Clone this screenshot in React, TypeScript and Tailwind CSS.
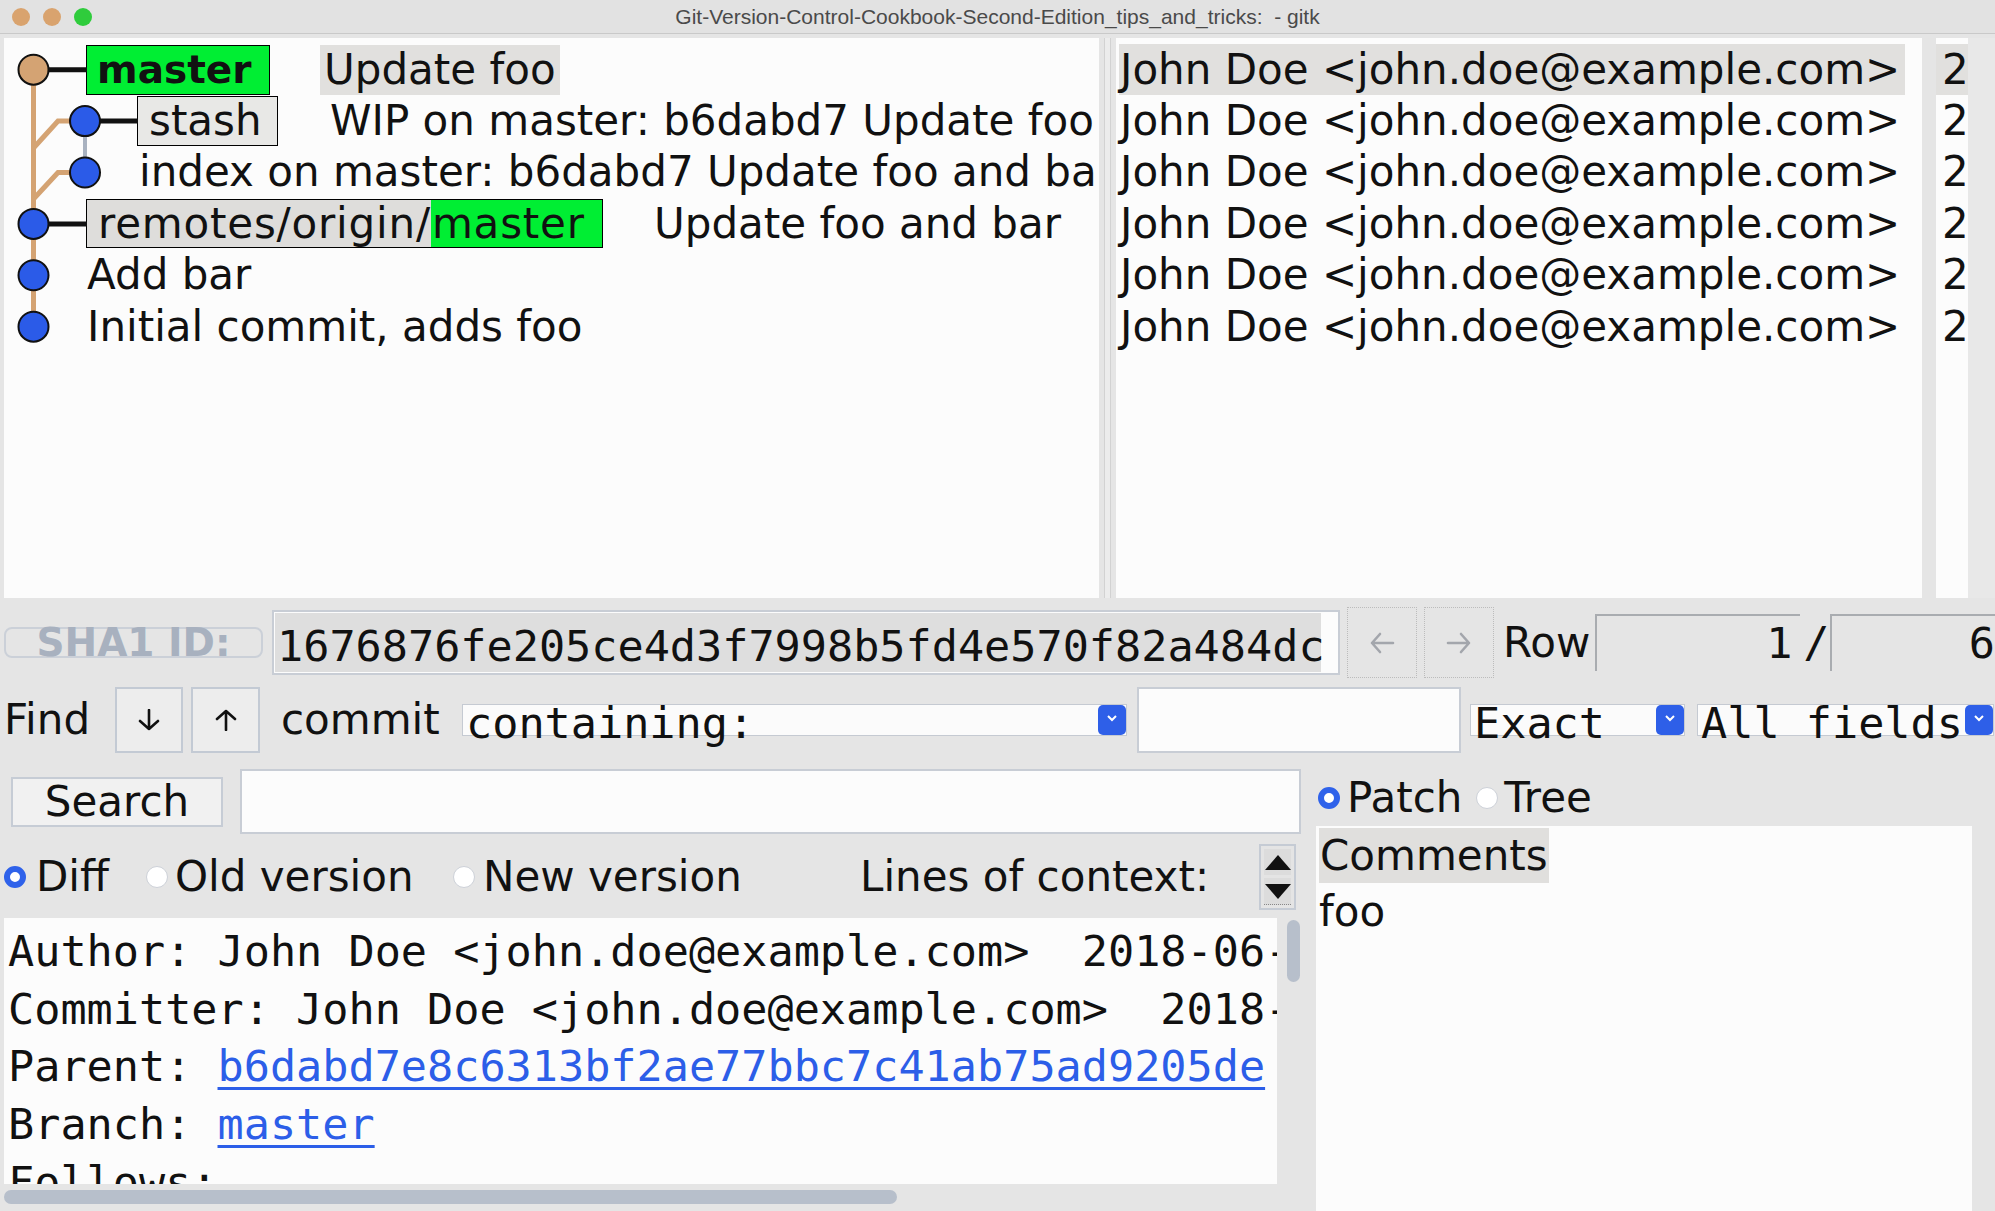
import React from 'react';

const SANS = "font-['DejaVu_Sans',sans-serif]";
const MONO = "font-['DejaVu_Sans_Mono',monospace]";

const ROW_Y = [31.7, 83.1, 134.5, 185.9, 237.3, 288.7];

function Graph() {
  return (
    <svg className="absolute left-0 top-0" width="150" height="330" viewBox="0 0 150 330">
      <path d="M29.5 31.7 V288.7" stroke="#d4a373" strokeWidth="5" fill="none" />
      <path d="M81 83.1 H54 L29.5 110" stroke="#d4a373" strokeWidth="5" fill="none" />
      <path d="M81 134.5 H54 L29.5 161" stroke="#d4a373" strokeWidth="5" fill="none" />
      <path d="M81 83.1 V134.5" stroke="#a9b2c0" strokeWidth="4" fill="none" />
      <path d="M29.5 31.7 H83" stroke="#111" strokeWidth="5" />
      <path d="M81 83.1 H134" stroke="#111" strokeWidth="5" />
      <path d="M29.5 185.9 H83" stroke="#111" strokeWidth="5" />
      {ROW_Y.map((y, i) => (
        <circle
          key={i}
          cx={i === 1 || i === 2 ? 81 : 29.5}
          cy={y}
          r="15"
          fill={i === 0 ? '#d4a373' : '#2b5be8'}
          stroke="#111"
          strokeWidth="2"
        />
      ))}
    </svg>
  );
}

function Radio({ on }: { on?: boolean }) {
  if (on) {
    return <span className="w-[22px] h-[22px] rounded-full border-[6px] border-[#2f62ea] bg-white shrink-0" />;
  }
  return <span className="w-[22px] h-[22px] rounded-full border border-[#cdd1d8] bg-white shrink-0" />;
}

function BlueDrop() {
  return (
    <span className="w-[28px] h-full rounded-[5px] bg-[#2e5fe8] flex items-start justify-center pt-[9px] shrink-0">
      <svg width="12" height="8" viewBox="0 0 12 8">
        <path d="M2 2 L6 6 L10 2" stroke="white" strokeWidth="2" fill="none" />
      </svg>
    </span>
  );
}

function Combo({ text, className }: { text: string; className: string }) {
  return (
    <div className={`flex h-[32px] border border-[#c5cad2] bg-[#fbfbfb] ${className}`}>
      <span className={`flex-1 flex items-center pl-[3px] pt-[8px] ${MONO} text-[43.5px] leading-none whitespace-pre`}>
        {text}
      </span>
      <BlueDrop />
    </div>
  );
}

function Arrow({ dir, color }: { dir: 'up' | 'down' | 'left' | 'right'; color: string }) {
  const d = {
    down: 'M12 1 V20 M3 12 L12 20 L21 12',
    up: 'M12 21 V2 M3 10 L12 2 L21 10',
    left: 'M24 11 H3 M11 2 L3 11 L11 20',
    right: 'M2 11 H23 M15 2 L23 11 L15 20',
  }[dir];
  const horiz = dir === 'left' || dir === 'right';
  return (
    <svg width={horiz ? 26 : 24} height="22" viewBox={horiz ? '0 0 26 22' : '0 0 24 22'}>
      <path d={d} stroke={color} strokeWidth="2.6" fill="none" strokeLinecap="round" strokeLinejoin="round" />
    </svg>
  );
}

function TopPanes() {
  return (
    <div className="h-[573px] pt-[4px] flex">
      {/* graph + headlines */}
      <div className={`ml-[4px] w-[1095px] h-[560px] bg-[#fcfcfc] relative overflow-hidden ${SANS} text-[42px] text-[#111] whitespace-nowrap`}>
        <Graph />
        <div className="pt-[6px] flex flex-col">
          <div className="h-[51.4px] flex items-center pl-[82px]">
            <span className="w-[184px] h-[50px] bg-[#00ee33] border border-black flex items-center pl-[10px] font-bold text-[39px] leading-none">master</span>
            <span className="ml-[50px] h-[50px] bg-[#e1e0de] flex items-center px-[4px] leading-none">Update foo</span>
          </div>
          <div className="h-[51.4px] flex items-center pl-[133px]">
            <span className="w-[141px] h-[50px] bg-[#e8e8e6] border border-black flex items-center pl-[11px] leading-none">stash</span>
            <span className="ml-[52px] leading-none">WIP on master: b6dabd7 Update foo</span>
          </div>
          <div className="h-[51.4px] flex items-center pl-[135px]">
            <span className="leading-none">index on master: b6dabd7 Update foo and bar</span>
          </div>
          <div className="h-[51.4px] flex items-center pl-[82px]">
            <span className="w-[517px] h-[49px] border border-black flex">
              <span className="bg-[#dedddb] flex items-center pl-[11px] leading-none tracking-[0.8px]">remotes/origin/</span>
              <span className="flex-1 bg-[#00ee33] flex items-center pl-[1px] leading-none tracking-[0.8px]">master</span>
            </span>
            <span className="ml-[51px] leading-none">Update foo and bar</span>
          </div>
          <div className="h-[51.4px] flex items-center pl-[83px] leading-none">Add bar</div>
          <div className="h-[51.4px] flex items-center pl-[83px] leading-none">Initial commit, adds foo</div>
        </div>
      </div>
      {/* sash */}
      <div className="w-[17px] h-[560px] flex justify-center">
        <div className="w-[7px] h-full border-x border-[#d2d2d2] bg-[#ececec]" />
      </div>
      {/* authors */}
      <div className={`w-[806px] h-[560px] bg-[#fcfcfc] overflow-hidden ${SANS} text-[42px] text-[#111] whitespace-nowrap pt-[6px]`}>
        {[0, 1, 2, 3, 4, 5].map((i) => (
          <div key={i} className="h-[51.4px] flex items-center pl-[3px]">
            <span className={`h-[51px] w-[786px] flex items-center leading-none pl-[1px] ${i === 0 ? 'bg-[#e1e0de]' : ''}`}>
              John Doe &lt;john.doe@example.com&gt;
            </span>
          </div>
        ))}
      </div>
      <div className="w-[14px]" />
      {/* dates */}
      <div className={`w-[32px] h-[560px] bg-[#fcfcfc] overflow-hidden ${SANS} text-[42px] text-[#111] whitespace-nowrap pt-[6px]`}>
        {[0, 1, 2, 3, 4, 5].map((i) => (
          <div key={i} className={`h-[51.4px] flex items-center pl-[6px] leading-none ${i === 0 ? 'bg-[#e1e0de]' : ''}`}>
            2018-06-10
          </div>
        ))}
      </div>
      <div className="flex-1 h-[560px] bg-[#e8e8e8]" />
    </div>
  );
}

function ShaRow() {
  return (
    <div className={`h-[71px] flex items-center ${SANS} text-[42px] text-[#111] whitespace-nowrap`}>
      <div className="ml-[4px] w-[259px] h-[31px] rounded-[8px] border-2 border-[#cbd0d8] flex items-center justify-center text-[39px] font-bold leading-none text-[#a8b1bf]">
        SHA1 ID:
      </div>
      <div className="ml-[9px] w-[1068px] h-[65px] border-2 border-[#c8cdd5] bg-[#fcfcfc] p-[1px] flex">
        <div className={`w-[1046px] h-full bg-[#dedede] flex items-center pt-[8px] pl-[2px] ${MONO} text-[43.5px] leading-none`}>
          1676876fe205ce4d3f7998b5fd4e570f82a484dc
        </div>
      </div>
      <div className="ml-[7px] w-[70px] h-[71px] border border-dotted border-[#bcbcbc] flex items-center justify-center">
        <Arrow dir="left" color="#a3a6ac" />
      </div>
      <div className="ml-[7px] w-[70px] h-[71px] border border-dotted border-[#bcbcbc] flex items-center justify-center">
        <Arrow dir="right" color="#a3a6ac" />
      </div>
      <span className="ml-[9px] leading-none">Row</span>
      <div className={`ml-[5px] w-[205px] h-[57px] border-l-2 border-t-2 border-[#a9acb0] flex items-center justify-end pr-[8px] ${MONO} text-[43.5px] leading-none`}>
        1
      </div>
      <span className={`ml-[3px] w-[27px] ${MONO} text-[43.5px] leading-none`}>/</span>
      <div className={`flex-1 h-[57px] border-l-2 border-t-2 border-[#a9acb0] flex items-center justify-end ${MONO} text-[43.5px] leading-none`}>
        6
      </div>
    </div>
  );
}

function FindRow() {
  return (
    <div className={`mt-[9px] h-[66px] flex items-center ${SANS} text-[42px] text-[#111] whitespace-nowrap`}>
      <span className="w-[115px] pl-[4px] leading-none">Find</span>
      <div className="w-[68px] h-[66px] border-2 border-[#c3cad4] bg-[#ededed] flex items-center justify-center">
        <Arrow dir="down" color="#111" />
      </div>
      <div className="ml-[8px] w-[69px] h-[66px] border-2 border-[#c3cad4] bg-[#ededed] flex items-center justify-center">
        <Arrow dir="up" color="#111" />
      </div>
      <span className="ml-[21px] w-[181px] leading-none">commit</span>
      <Combo text="containing:" className="w-[665px]" />
      <div className="ml-[10px] w-[324px] h-[66px] border-2 border-[#c8cdd5] bg-[#fcfcfc]" />
      <Combo text="Exact" className="ml-[9px] w-[215px]" />
      <Combo text="All fields" className="ml-[12px] w-[297px]" />
    </div>
  );
}

function DiffPane() {
  return (
    <div className="mt-[6px] h-[266px] flex">
      <div className={`ml-[4px] w-[1273px] h-full bg-[#fcfcfc] overflow-hidden pt-[5px] pl-[4px] ${MONO} text-[43.5px] leading-[57.7px] text-[#111] whitespace-pre`}>
        <div>Author: John Doe &lt;john.doe@example.com&gt;  2018-06-10 12:00:00</div>
        <div>Committer: John Doe &lt;john.doe@example.com&gt;  2018-06-10 12:00:00</div>
        <div>
          Parent: <span className="text-[#2c5ee8] underline decoration-[3px] underline-offset-[6px]">b6dabd7e8c6313bf2ae77bbc7c41ab75ad9205de</span>
        </div>
        <div>
          Branch: <span className="text-[#2c5ee8] underline decoration-[3px] underline-offset-[6px]">master</span>
        </div>
        <div>Follows:</div>
      </div>
      <div className="flex-1 h-full pl-[10px] pt-[2px]">
        <div className="w-[13px] h-[62px] rounded-full bg-[#b7bfcb]" />
      </div>
    </div>
  );
}

function LowerLeft() {
  return (
    <div className={`w-[1305px] flex flex-col ${SANS} text-[42px] text-[#111] whitespace-nowrap`}>
      <div className="mt-[16px] h-[65px] flex items-center">
        <div className="ml-[11px] w-[212px] h-[50px] border-2 border-[#c6ccd5] bg-[#f1f1f1] flex items-center justify-center leading-none">
          Search
        </div>
        <div className="ml-[17px] w-[1061px] h-[65px] border-2 border-[#c8cdd5] bg-[#fcfcfc]" />
      </div>
      <div className="mt-[8px] h-[70px] flex items-center">
        <div className="w-[146px] pl-[4px] flex items-center">
          <Radio on />
          <span className="ml-[10px] leading-none">Diff</span>
        </div>
        <div className="w-[307px] flex items-center">
          <Radio />
          <span className="ml-[7px] leading-none">Old version</span>
        </div>
        <div className="w-[407px] flex items-center">
          <Radio />
          <span className="ml-[8px] leading-none">New version</span>
        </div>
        <span className="w-[399px] leading-none">Lines of context:</span>
        <div className="w-[37px] h-[66px] border-2 border-[#c5cbd4] bg-[#e4e4e4] flex flex-col p-[3px] gap-[3px]">
          <div className="flex-1 bg-[#dcdcdc] flex items-center justify-center">
            <svg width="26" height="15" viewBox="0 0 26 15"><path d="M13 0 L26 15 H0 Z" fill="#111" /></svg>
          </div>
          <div className="flex-1 bg-[#dcdcdc] flex items-center justify-center border-b border-dotted border-[#888]">
            <svg width="26" height="15" viewBox="0 0 26 15"><path d="M0 0 H26 L13 15 Z" fill="#111" /></svg>
          </div>
        </div>
      </div>
      <DiffPane />
      <div className="mt-[6px] h-[16px] pl-[4px]">
        <div className="w-[893px] h-[14px] rounded-full bg-[#b7bfcb]" />
      </div>
    </div>
  );
}

function LowerRight() {
  return (
    <div className={`flex-1 flex flex-col ${SANS} text-[42px] text-[#111] whitespace-nowrap`}>
      <div className="mt-[22px] h-[45px] flex items-center pl-[13px]">
        <Radio on />
        <span className="ml-[7px] leading-none">Patch</span>
        <span className="ml-[14px]" />
        <Radio />
        <span className="ml-[6px] leading-none">Tree</span>
      </div>
      <div className="mt-[6px] ml-[11px] w-[656px] flex-1 bg-[#fcfcfc] pt-[2px] pl-[3px]">
        <div className="w-[230px] h-[55px] bg-[#e0dfdd] flex items-center pl-[1px] leading-none">Comments</div>
        <div className="mt-[4px] leading-[50px]">foo</div>
      </div>
    </div>
  );
}

export default function App() {
  return (
    <div className="w-[1995px] h-[1211px] overflow-hidden bg-[#e5e5e5] flex flex-col">
      <div className="h-[34px] shrink-0 grid grid-cols-[1fr_auto_1fr] items-center bg-[#e2e2e2] border-b border-[#c9c9c9]">
        <div className="flex items-center gap-[13px] pl-[12px]">
          <span className="w-[18px] h-[18px] rounded-full bg-[#d9a36e]" />
          <span className="w-[18px] h-[18px] rounded-full bg-[#d9a36e]" />
          <span className="w-[18px] h-[18px] rounded-full bg-[#2fcc3c]" />
        </div>
        <span className="font-['Liberation_Sans',sans-serif] text-[21px] leading-none text-[#4a4a4a] whitespace-pre">
          Git-Version-Control-Cookbook-Second-Edition_tips_and_tricks:  - gitk
        </span>
        <div />
      </div>
      <TopPanes />
      <ShaRow />
      <FindRow />
      <div className="flex-1 flex">
        <LowerLeft />
        <LowerRight />
      </div>
    </div>
  );
}
